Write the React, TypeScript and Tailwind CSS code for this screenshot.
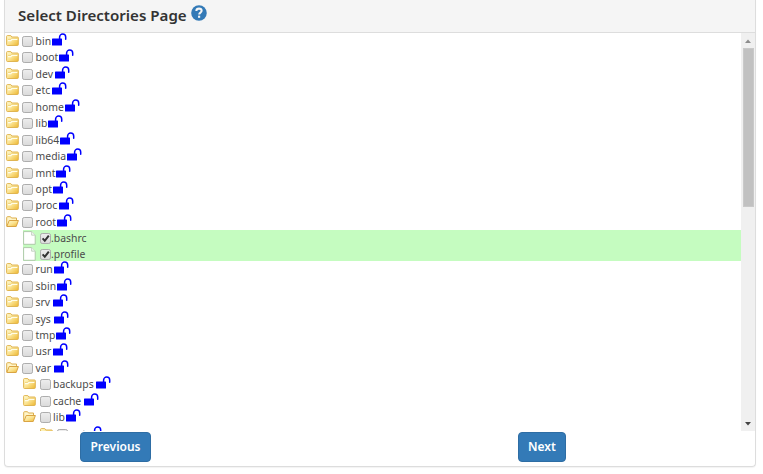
type Entry = { name: string; w: number; level?: number; open?: boolean; file?: boolean };

const entries: Entry[] = [
  { name: "bin", w: 16 },
  { name: "boot", w: 23 },
  { name: "dev", w: 19.5 },
  { name: "etc", w: 16 },
  { name: "home", w: 29 },
  { name: "lib", w: 12.5 },
  { name: "lib64", w: 24.5 },
  { name: "media", w: 31.5 },
  { name: "mnt", w: 20.5 },
  { name: "opt", w: 17 },
  { name: "proc", w: 23 },
  { name: "root", w: 21.5, open: true },
  { name: ".bashrc", w: 36, level: 1, file: true },
  { name: ".profile", w: 34, level: 1, file: true },
  { name: "run", w: 18 },
  { name: "sbin", w: 21.5 },
  { name: "srv", w: 17 },
  { name: "sys", w: 18 },
  { name: "tmp", w: 20.5 },
  { name: "usr", w: 17 },
  { name: "var", w: 18, open: true },
  { name: "backups", w: 42.5, level: 1 },
  { name: "cache", w: 30.5, level: 1 },
  { name: "lib", w: 13, level: 1, open: true },
  { name: "apt", w: 17, level: 2 },
];

function Folder({ open }: { open?: boolean }) {
  return (
    <svg className="mt-[2px] h-[12px] w-[13px] shrink-0" viewBox="0 0 13 12">
      <defs>
        <linearGradient id="gold" x1="0" y1="0" x2="1" y2="1">
          <stop offset="0" stopColor="#fffbd0" />
          <stop offset=".5" stopColor="#fbe391" />
          <stop offset="1" stopColor="#edb72f" />
        </linearGradient>
      </defs>
      {open ? (
        <>
          <path d="M.7 10V1.5q0-.8.8-.8h3l1 1.3h5v3" fill="#fff5c8" stroke="#dcae4c" />
          <path d="M3.2 4.5h9.2l-2.2 6H.8z" fill="url(#gold)" stroke="#daa443" strokeLinejoin="round" />
        </>
      ) : (
        <>
          <path d="M.6 9.6V1.4q0-.8.8-.8h3.4l1 1.4h5.8q.7 0 .7.7v7q0 .8-.8.8H1.4q-.8 0-.8-.9z" fill="url(#gold)" stroke="#e0b552" />
          <path d="M2 5.7h2.8L6 4.4h5.4" fill="none" stroke="#fffde8" strokeWidth="1.2" />
          <path d="M2 4.4h2.4L5.5 3.3h5.8" fill="none" stroke="#e8c25f" strokeWidth=".6" />
        </>
      )}
    </svg>
  );
}

function Page() {
  return (
    <svg className="mt-[1px] h-[14px] w-[13px] shrink-0" viewBox="0 0 13 14">
      <path d="M.6.6h8l3.6 3.6v9.1H.6z" fill="#fff" stroke="#a9c4a4" strokeWidth=".9" />
      <path d="M8.6.6v3.6h3.6" fill="#f4f4f4" stroke="#b8cbb5" strokeWidth=".8" />
    </svg>
  );
}

function Check({ checked }: { checked?: boolean }) {
  return (
    <svg className="mt-[3px] ml-[3.5px] h-[11px] w-[11px] shrink-0" viewBox="0 0 11 11">
      <defs>
        <linearGradient id="box" x1="0" y1="0" x2="0" y2="1">
          <stop offset="0" stopColor="#eeeeee" />
          <stop offset="1" stopColor="#dadada" />
        </linearGradient>
      </defs>
      <rect x=".5" y=".5" width="10" height="10" rx="1.7" fill="url(#box)" stroke="#adadad" />
      {checked && <path d="M2.6 5.3l2.2 2.5L8.8 2.6" fill="none" stroke="#333" strokeWidth="2" />}
    </svg>
  );
}

function Unlock() {
  return (
    <svg className="h-[13px] w-[15px] shrink-0" viewBox="0 0 15 13">
      <rect x="0" y="5.5" width="10" height="7" rx=".6" fill="#00f" />
      <path d="M7.6 6V4.1a3.05 3.05 0 0 1 6.1 0v2.2" fill="none" stroke="#00f" strokeWidth="1.5" strokeLinecap="round" />
    </svg>
  );
}

function Row({ entry }: { entry: Entry }) {
  const indent = entry.level === 2 ? "pl-[35px]" : entry.level === 1 ? "pl-[18px]" : "pl-[0.5px]";
  return (
    <div className={`${indent} ${entry.file ? "h-[15.5px]" : "h-[16.45px]"}`}>
      <div className={`flex h-full items-start ${entry.file ? "bg-[#c5fcc0]" : ""}`}>
        {entry.file ? <Page /> : <Folder open={entry.open} />}
        <Check checked={entry.file} />
        <span
          className={`shrink-0 whitespace-nowrap text-[10.4px] leading-[16.5px] text-[#4b4b4b] ${entry.file ? "ml-[0.5px]" : "ml-[2.6px]"}`}
          style={{ width: entry.w }}
        >
          {entry.name}
        </span>
        {!entry.file && <Unlock />}
      </div>
    </div>
  );
}

export default function App() {
  return (
    <div className="h-[474px] w-[763px] overflow-hidden bg-white pl-[4px] font-['Noto_Sans',sans-serif]">
      <div className="flex h-[467px] w-[752px] flex-col rounded-b-[4px] border border-t-0 border-[#dddddd] shadow-[0_1px_1px_rgba(0,0,0,0.05)]">
        <header className="flex h-[33px] shrink-0 items-start border-b border-[#dddddd] bg-[#f5f5f5] pl-[13px]">
          <h1 className="w-[173px] whitespace-nowrap pt-[4px] text-[15.1px] font-semibold leading-[22px] text-[#333]">
            Select Directories Page
          </h1>
          <svg className="mt-[5px] h-[16px] w-[16px]" viewBox="0 0 15 15">
            <circle cx="7.5" cy="7.5" r="7.3" fill="#337ab7" />
            <path d="M5 5.6Q5.1 3.4 7.5 3.4t2.5 2.1c0 1.7-2.3 1.6-2.3 3.3" fill="none" stroke="#f5f5f5" strokeWidth="1.9" />
            <rect x="6.6" y="10" width="2" height="2" fill="#f5f5f5" />
          </svg>
        </header>
        <div className="flex h-[398px] shrink-0">
          <div className="h-full flex-1 overflow-hidden">
            {entries.map((entry, i) => (
              <Row key={i} entry={entry} />
            ))}
          </div>
          <div className="flex w-[14px] flex-col items-center bg-[#f0f0f0]">
            <svg className="h-[15px] w-[14px] shrink-0" viewBox="0 0 14 15">
              <path d="M4 10l3-3.5 3 3.5z" fill="#8c8c8c" />
            </svg>
            <div className="h-[159px] w-[11px] border border-[#c9c9c9] bg-[#c1c1c1]" />
            <svg className="mt-auto h-[15px] w-[14px] shrink-0" viewBox="0 0 14 15">
              <path d="M4 6h6L7 9.5z" fill="#444" />
            </svg>
          </div>
        </div>
        <div className="flex pt-[0.5px] pl-[75px] text-[12px] font-semibold text-white">
          <button className="h-[30px] w-[71px] rounded-[4px] border border-[#2e6da4] bg-[#337ab7]">Previous</button>
          <button className="ml-[367px] h-[30px] w-[48px] rounded-[4px] border border-[#2e6da4] bg-[#337ab7]">Next</button>
        </div>
      </div>
    </div>
  );
}
